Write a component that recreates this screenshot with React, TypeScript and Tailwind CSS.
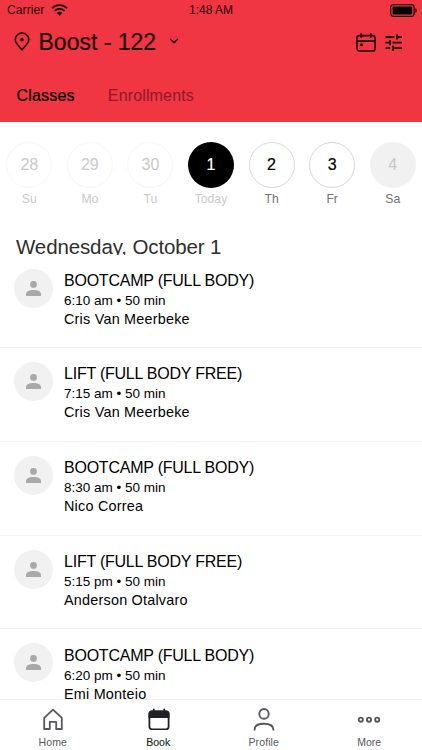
const days = [
  { num: '28', label: 'Su', state: 'past' },
  { num: '29', label: 'Mo', state: 'past' },
  { num: '30', label: 'Tu', state: 'past' },
  { num: '1', label: 'Today', state: 'selected' },
  { num: '2', label: 'Th', state: 'open' },
  { num: '3', label: 'Fr', state: 'open' },
  { num: '4', label: 'Sa', state: 'closed' },
];

const CIRCLE_CLASSES: Record<string, string> = {
  past: 'border border-[#f6f6f6] text-[#c9c9c9]',
  selected: 'bg-black text-white [-webkit-text-stroke:0.2px_white]',
  open: 'border border-[#d6d6d6] text-black [-webkit-text-stroke:0.2px_black]',
  closed: 'bg-[#f1f1f1] text-[#c6c6c6]',
};

const LABEL_CLASSES: Record<string, string> = {
  past: 'text-[#c9c9c9]',
  selected: 'text-[#c9c9c9]',
  open: 'text-[#717171]',
  closed: 'text-[#717171]',
};

const classes = [
  { title: 'BOOTCAMP (FULL BODY)', time: '6:10 am • 50 min', coach: 'Cris Van Meerbeke' },
  { title: 'LIFT (FULL BODY FREE)', time: '7:15 am • 50 min', coach: 'Cris Van Meerbeke' },
  { title: 'BOOTCAMP (FULL BODY)', time: '8:30 am • 50 min', coach: 'Nico Correa' },
  { title: 'LIFT (FULL BODY FREE)', time: '5:15 pm • 50 min', coach: 'Anderson Otalvaro' },
  { title: 'BOOTCAMP (FULL BODY)', time: '6:20 pm • 50 min', coach: 'Emi Montejo' },
];

function StatusBar() {
  return (
    <div className="grid h-5 grid-cols-3 items-center pl-[7px] pr-1 text-[12px] text-[#2a0508]">
      <div className="flex items-center gap-[7px]">
        <span className="tracking-[0.1px]">Carrier</span>
        <svg width="17" height="12" viewBox="0 0 17 12" fill="none" stroke="#1c0305" strokeWidth="1.9">
          <path d="M1 4.2a10.6 10.6 0 0 1 15 0" />
          <path d="M3.6 6.9a6.9 6.9 0 0 1 9.8 0" />
          <path d="M8.5 11.8 5.9 9.1a3.7 3.7 0 0 1 5.2 0z" fill="#1c0305" stroke="none" />
        </svg>
      </div>
      <span className="-ml-[3px] text-center">1:48 AM</span>
      <svg className="justify-self-end" width="28" height="13" viewBox="0 0 28 13">
        <rect x="0.7" y="0.7" width="23.4" height="11.6" rx="2.6" fill="none" stroke="#1c0305" strokeWidth="1.2" />
        <rect x="2.6" y="2.5" width="19.6" height="8" rx="1" fill="#000" />
        <path d="M25.4 4.2c1.9.6 1.9 4 0 4.6z" fill="#1c0305" />
      </svg>
    </div>
  );
}

function Header() {
  return (
    <header className="h-[122px] shrink-0 bg-[#f03543]">
      <StatusBar />
      <div className="flex h-11 items-center pl-[14px] pr-[20px]">
        <svg className="mb-[2px]" width="16" height="19" viewBox="0 0 16 19" fill="none" stroke="#1c0305" strokeWidth="1.6">
          <path d="M8 17.6C4.2 13.9 1.2 10.9 1.2 7.8a6.8 6.8 0 0 1 13.6 0c0 3.1-3 6.1-6.8 9.8z" />
          <circle cx="8" cy="7.8" r="1.8" fill="#1c0305" stroke="none" />
        </svg>
        <h1 className="ml-[8.5px] text-[23px] leading-none text-[#1c0305] [-webkit-text-stroke:0.2px_#1c0305]">
          Boost - 122
        </h1>
        <svg className="ml-[12.5px] mb-[2px]" width="10" height="6" viewBox="0 0 10 6" fill="none" stroke="#1c0305" strokeWidth="1.4">
          <path d="M1 0.8 5 4.7 9 0.8" />
        </svg>
        <div className="ml-auto flex items-center gap-[9px]">
          <svg width="20" height="19" viewBox="0 0 20 19" fill="none" stroke="#1c0305" strokeWidth="1.7">
            <rect x="0.9" y="2.6" width="18.2" height="15.4" rx="2.6" />
            <path d="M1 8.1h18M5.2 0.2v4.6M14.8 0.2v4.6" />
            <circle cx="5.5" cy="11.8" r="1.5" fill="#1c0305" stroke="none" />
          </svg>
          <svg width="17" height="17" viewBox="0 0 17 17" fill="none" stroke="#1c0305" strokeWidth="1.8">
            <path d="M0.5 3h8.9M12 3h5M12 0.4v5.2M0.5 8.6h4.6M7.6 8.6H17M5.1 6v5.2M0.5 14.1h4.6M8 14.1h9M8 11.5v5.2" />
          </svg>
        </div>
      </div>
      <nav className="flex h-[58px] items-center gap-[33px] pl-[16.5px] pt-[6px] text-base">
        <span className="tracking-[0.2px] text-black [-webkit-text-stroke:0.2px_black]">Classes</span>
        <span className="text-[#8f1a25] tracking-[0.15px]">Enrollments</span>
      </nav>
    </header>
  );
}

function DayPicker() {
  return (
    <div className="-mx-[1px] grid h-[112px] shrink-0 grid-cols-7 pt-[19.5px]">
      {days.map(day => (
        <div key={day.num} className="flex flex-col items-center">
          <div className={`flex size-[46px] items-center justify-center rounded-full text-base ${CIRCLE_CLASSES[day.state]}`}>
            {day.num}
          </div>
          <span className={`mt-[3px] text-[12.2px] leading-4 ${LABEL_CLASSES[day.state]}`}>{day.label}</span>
        </div>
      ))}
    </div>
  );
}

function ClassRow({ title, time, coach }: { title: string; time: string; coach: string }) {
  return (
    <li className="flex h-[93.7px] shrink-0 gap-[11px] border-b border-[#f3f3f3] pl-[14px] pt-[14px]">
      <div className="flex size-[39px] items-center justify-center rounded-full bg-[#f1f1f1]">
        <svg width="15" height="15" viewBox="0 0 15 15" fill="#a9a9a9">
          <circle cx="7.5" cy="3.4" r="3.4" />
          <path d="M0 15v-2c0-2.6 3.5-4 7.5-4s7.5 1.4 7.5 4v2z" />
        </svg>
      </div>
      <div className="whitespace-nowrap text-black">
        <div className="mt-[2.3px] text-base leading-5 tracking-[-0.23px]">{title}</div>
        <div className="text-[13.5px] leading-[19px]">{time}</div>
        <div className="text-[14.4px] leading-[19px] tracking-[0.22px]">{coach}</div>
      </div>
    </li>
  );
}

function TabBar() {
  return (
    <nav className="grid h-[51px] shrink-0 grid-cols-4 border-t border-[#f0f0f0] bg-white text-[10.5px] text-[#56585c]">
      <div className="flex flex-col items-center">
        <svg className="mt-2" width="20" height="22" viewBox="0 0 20 22" fill="none" stroke="#56585c" strokeWidth="1.8" strokeLinejoin="round">
          <path d="M1.2 9.9 10 1.6l8.8 8.3V21h-5.6v-7.2H6.8V21H1.2z" />
        </svg>
        <span className="mt-[4px] leading-4 tracking-[0.1px]">Home</span>
      </div>
      <div className="flex flex-col items-center text-[#202225]">
        <svg className="mt-2 ml-[2px]" width="22" height="22" viewBox="0 0 22 22" fill="none" stroke="#202225" strokeWidth="1.8">
          <rect x="1.4" y="3.4" width="19.2" height="18" rx="2.6" />
          <path d="M1.4 9.2V6Q1.4 3.4 4 3.4h14q2.6 0 2.6 2.6v3.2z" fill="#202225" />
          <path d="M5.8 1.4v2M16.2 1.4v2" strokeLinecap="round" />
        </svg>
        <span className="mt-[4px] leading-4 [-webkit-text-stroke:0.1px_#202225]">Book</span>
      </div>
      <div className="flex flex-col items-center">
        <svg className="mt-2" width="22" height="23" viewBox="0 0 22 23" fill="none" stroke="#56585c" strokeWidth="1.9">
          <ellipse cx="11" cy="5.9" rx="4.7" ry="4.9" />
          <path d="M1.6 22.6v-1.2c0-3.4 3.6-5.6 9.4-5.6s9.4 2.2 9.4 5.6v1.2" />
        </svg>
        <span className="mt-[3px] leading-4 tracking-[0.1px]">Profile</span>
      </div>
      <div className="flex flex-col items-center">
        <svg className="mt-2" width="24" height="22" viewBox="0 0 24 22" fill="none" stroke="#56585c" strokeWidth="1.9">
          <circle cx="3.8" cy="11.7" r="2.1" />
          <circle cx="12" cy="11.7" r="2.1" />
          <circle cx="20.2" cy="11.7" r="2.1" />
        </svg>
        <span className="mt-[4px] leading-4">More</span>
      </div>
    </nav>
  );
}

export default function App() {
  return (
    <div className="flex h-[750px] w-[422px] flex-col overflow-hidden bg-white font-['Liberation_Sans',Arial,sans-serif]">
      <Header />
      <DayPicker />
      {/* The heading box is shorter than its text, so descenders are cut off */}
      <h2 className="h-[20.5px] shrink-0 overflow-hidden whitespace-nowrap pl-4 text-[20.5px] leading-[25px] tracking-[-0.12px] text-[#2e2e2e]">
        Wednesday, October 1
      </h2>
      <ul className="flex min-h-0 flex-1 flex-col overflow-hidden">
        {classes.map(item => (
          <ClassRow key={item.time} {...item} />
        ))}
      </ul>
      <TabBar />
    </div>
  );
}
